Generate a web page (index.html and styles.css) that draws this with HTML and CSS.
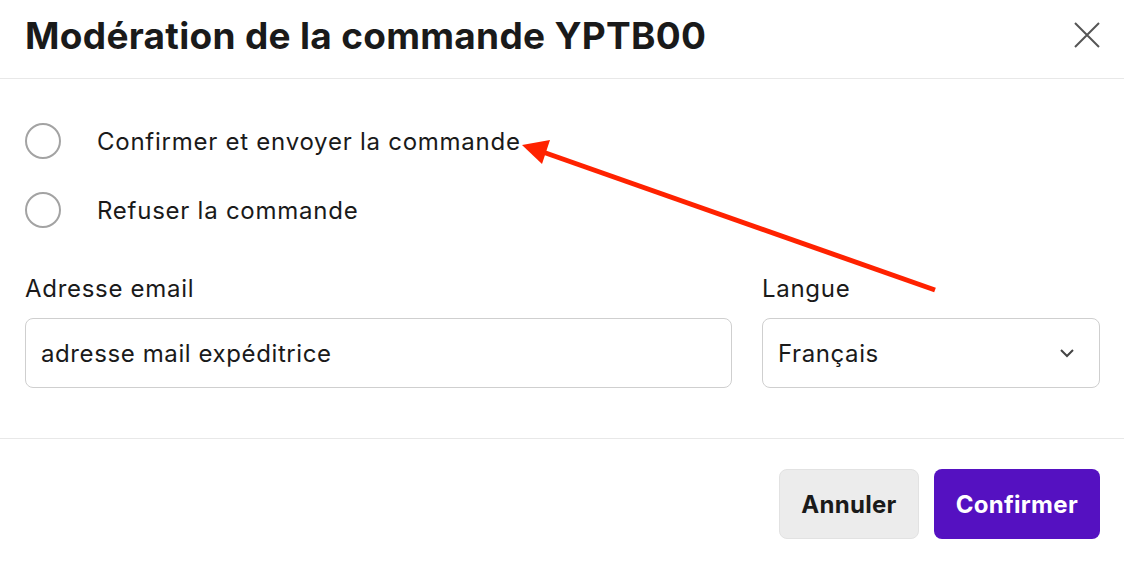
FILE: index.html
```html
<!DOCTYPE html>
<html lang="fr">
<head>
    <meta charset="UTF-8">
    <meta name="viewport" content="width=device-width, initial-scale=1.0">
    <title>Modération de la commande YPTB00</title>
    <link rel="stylesheet" href="styles.css">
</head>
<body>
    <div class="modal">
        <header class="modal-header">
            <h1>Modération de la commande YPTB00</h1>
            <button class="close" aria-label="Fermer">
                <svg width="26" height="26" viewBox="0 0 26 26">
                    <path d="M1 1 L25 25 M25 1 L1 25" stroke="#555" stroke-width="2" fill="none"/>
                </svg>
            </button>
        </header>

        <div class="modal-body">
            <div class="choices">
                <label class="choice"><span class="radio"></span>Confirmer et envoyer la commande</label>
                <label class="choice"><span class="radio"></span>Refuser la commande</label>
            </div>

            <div class="fields">
                <div class="field">
                    <div class="field-label">Adresse email</div>
                    <div class="input">adresse mail expéditrice</div>
                </div>
                <div class="field">
                    <div class="field-label">Langue</div>
                    <div class="input select">
                        Français
                        <svg width="16" height="10" viewBox="0 0 16 10">
                            <path d="M2 2 L8 8 L14 2" stroke="#444" stroke-width="2" fill="none"/>
                        </svg>
                    </div>
                </div>
            </div>
        </div>

        <footer class="modal-footer">
            <button class="btn btn-cancel">Annuler</button>
            <button class="btn btn-primary">Confirmer</button>
        </footer>

        <!-- annotation -->
        <svg class="arrow" width="1124" height="566" viewBox="0 0 1124 566">
            <line x1="935" y1="290" x2="540" y2="151" stroke="#ff2200" stroke-width="5"/>
            <polygon points="522,145 550,140 542,164" fill="#ff2200"/>
        </svg>
    </div>
</body>
</html>
```

FILE: styles.css
```css
* {
    margin: 0;
    padding: 0;
    box-sizing: border-box;
    font-family: Inter, "Noto Sans", sans-serif;
}
body {
    background: white;
    color: #1a1a1a;
}
.modal {
    position: relative;
    width: 1124px;
    height: 566px;
}
.modal-header {
    height: 79px;
    border-bottom: 1px solid #e8e8e8;
    display: flex;
    align-items: center;
    justify-content: space-between;
    padding: 0 24px 8px 25px;
}
.modal-header h1 {
    font-size: 37px;
    font-weight: 700;
    letter-spacing: 0.3px;
}
.close {
    background: none;
    border: none;
    display: flex;
}
.modal-body {
    padding: 45px 24px 50px 25px;
    border-bottom: 1px solid #e8e8e8;
}
.choices {
    display: flex;
    flex-direction: column;
    gap: 35px;
}
.choice {
    display: flex;
    align-items: center;
    gap: 36px;
    font-size: 24px;
    letter-spacing: 0.75px;
    height: 34px;
}
.radio {
    width: 36px;
    height: 36px;
    border: 2px solid #a3a3a3;
    border-radius: 50%;
}
.fields {
    display: grid;
    grid-template-columns: 1fr 338px;
    gap: 30px;
    margin-top: 48px;
}
.field-label {
    font-size: 24px;
    letter-spacing: 0.7px;
    line-height: 28px;
    margin-bottom: 15px;
}
.input {
    height: 70px;
    border: 1px solid #cfcfcf;
    border-radius: 8px;
    display: flex;
    align-items: center;
    padding: 0 24px 0 15px;
    font-size: 24px;
    letter-spacing: 0.6px;
}
.select {
    justify-content: space-between;
}
.modal-footer {
    display: flex;
    justify-content: flex-end;
    gap: 15px;
    padding: 30px 24px 0 0;
}
.btn {
    height: 70px;
    border-radius: 8px;
    font-size: 24px;
    font-weight: 700;
    letter-spacing: 0.3px;
    padding: 0 21px;
    border: 1px solid transparent;
}
.btn-cancel {
    background: #ececec;
    border-color: #e2e2e2;
    color: #1a1a1a;
}
.btn-primary {
    background: #5511c1;
    color: white;
}
.arrow {
    position: absolute;
    top: 0;
    left: 0;
    pointer-events: none;
}
```
